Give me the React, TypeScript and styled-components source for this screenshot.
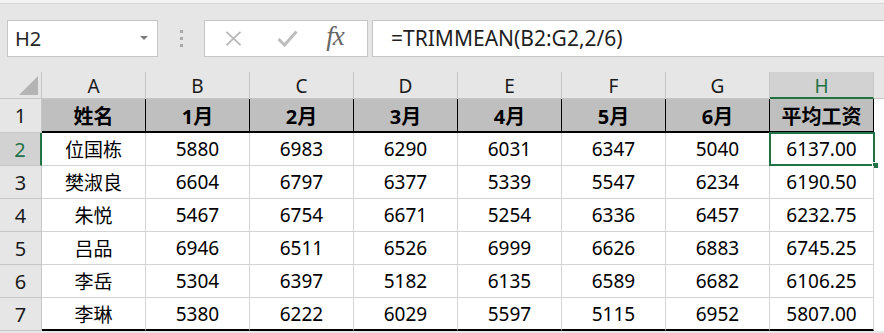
import React from "react";
import styled, { createGlobalStyle } from "styled-components";

const Global = createGlobalStyle`
  html, body { margin: 0; padding: 0; background: #ffffff; }
  body { font-family: "Noto Sans", "Noto Sans CJK SC", sans-serif; overflow: hidden; }
  * { box-sizing: border-box; }
`;

const Page = styled.div`
  width: 884px;
  height: 333px;
  overflow: hidden;
  background: #e6e6e6;
  display: flex;
  flex-direction: column;
`;

const TopStrip = styled.div`
  height: 4px;
  background: #f3f3f3;
  border-bottom: 1px solid #d6d6d6;
`;

const FormulaBar = styled.div`
  display: flex;
  align-items: center;
  height: 68px;
  padding: 15px 0 15px 7px;
`;

const NameBox = styled.div`
  width: 151px;
  height: 37px;
  background: #fff;
  border: 1px solid #c6c6c6;
  display: flex;
  align-items: center;
  justify-content: space-between;
  padding: 0 9px 0 7px;
  font-size: 20px;
  color: #262626;
`;

const Caret = styled.span`
  width: 0;
  height: 0;
  border-left: 4px solid transparent;
  border-right: 4px solid transparent;
  border-top: 4px solid #7a7a7a;
`;

const Grip = styled.div`
  width: 46px;
  display: flex;
  flex-direction: column;
  align-items: center;
  gap: 4px;
  span {
    width: 3px;
    height: 3px;
    background: #a9a9a9;
  }
`;

const ButtonBox = styled.div`
  width: 164px;
  height: 37px;
  background: #fff;
  border: 1px solid #c6c6c6;
  display: flex;
  align-items: center;
  padding-left: 18px;
`;

const IconSlot = styled.div<{ $w: number; $ml?: number }>`
  width: ${(p) => p.$w}px;
  margin-left: ${(p) => p.$ml ?? 0}px;
  display: flex;
  justify-content: center;
  align-items: center;
`;

const Fx = styled.span`
  font-family: "Liberation Serif", "DejaVu Serif", serif;
  font-style: italic;
  font-size: 27px;
  color: #666666;
  letter-spacing: -1px;
  line-height: 1;
  margin-top: -3px;
`;

const FormulaInput = styled.div`
  flex: 1;
  margin-left: 4px;
  height: 37px;
  background: #fff;
  border: 1px solid #c6c6c6;
  border-right: none;
  display: flex;
  align-items: center;
  padding-left: 18px;
  font-size: 21px;
  color: #1f1f1f;
`;

const Grid = styled.div`
  display: grid;
  grid-template-columns: 42px repeat(8, 104px) 1fr;
  grid-template-rows: 27px 34px repeat(6, 33px);
  background: #fff;
  font-size: 19px;
`;

const Corner = styled.div`
  background: #e6e6e6;
  border-right: 1px solid #c6c6c6;
  border-bottom: 1px solid #c6c6c6;
  position: relative;
  &::after {
    content: "";
    position: absolute;
    right: 3px;
    bottom: 3px;
    width: 0;
    height: 0;
    border-left: 19px solid transparent;
    border-bottom: 19px solid #b4b4b4;
  }
`;

const ColHead = styled.div<{ $sel?: boolean }>`
  background: ${(p) => (p.$sel ? "#d2d2d2" : "#e6e6e6")};
  color: ${(p) => (p.$sel ? "#217346" : "#1a1a1a")};
  border-right: 1px solid #c6c6c6;
  border-bottom: ${(p) => (p.$sel ? "2px solid #217346" : "1px solid #c6c6c6")};
  display: flex;
  align-items: center;
  justify-content: center;
  padding-top: 2px;
  font-size: 19px;
`;

const Filler = styled.div<{ $head?: boolean }>`
  background: ${(p) => (p.$head ? "#e6e6e6" : "#fff")};
  border-bottom: ${(p) => (p.$head ? "1px solid #c6c6c6" : "none")};
`;

const RowHead = styled.div<{ $sel?: boolean }>`
  background: ${(p) => (p.$sel ? "#d2d2d2" : "#e6e6e6")};
  color: ${(p) => (p.$sel ? "#217346" : "#1a1a1a")};
  border-right: ${(p) => (p.$sel ? "2px solid #217346" : "1px solid #c6c6c6")};
  border-bottom: 1px solid #c6c6c6;
  display: flex;
  align-items: center;
  justify-content: center;
  font-size: 20px;
`;

const HeadCell = styled.div`
  background: #bfbfbf;
  border-right: 1px solid #000;
  border-bottom: 2px solid #000;
  display: flex;
  align-items: center;
  justify-content: center;
  font-weight: 700;
  color: #000;
  font-size: 20px;
`;

const Cell = styled.div<{ $last?: boolean }>`
  position: relative;
  border-right: 1px solid #d4d4d4;
  border-bottom: ${(p) => (p.$last ? "2px solid #000" : "1px solid #d4d4d4")};
  display: flex;
  align-items: center;
  justify-content: center;
  color: #000;
`;

const Selection = styled.div`
  position: absolute;
  left: -1px;
  top: -1px;
  right: -2px;
  bottom: -1px;
  border: 2px solid #217346;
  pointer-events: none;
`;

const Handle = styled.div`
  position: absolute;
  right: -6px;
  bottom: -5px;
  width: 7px;
  height: 7px;
  background: #217346;
  border: 1px solid #fff;
`;

const cols = ["A", "B", "C", "D", "E", "F", "G", "H"];
const heads = ["姓名", "1月", "2月", "3月", "4月", "5月", "6月", "平均工资"];
const rows: string[][] = [
  ["位国栋", "5880", "6983", "6290", "6031", "6347", "5040", "6137.00"],
  ["樊淑良", "6604", "6797", "6377", "5339", "5547", "6234", "6190.50"],
  ["朱悦", "5467", "6754", "6671", "5254", "6336", "6457", "6232.75"],
  ["吕品", "6946", "6511", "6526", "6999", "6626", "6883", "6745.25"],
  ["李岳", "5304", "6397", "5182", "6135", "6589", "6682", "6106.25"],
  ["李琳", "5380", "6222", "6029", "5597", "5115", "6952", "5807.00"],
];

export default function App() {
  return (
    <Page>
      <Global />
      <TopStrip />
      <FormulaBar>
        <NameBox>
          <span>H2</span>
          <Caret />
        </NameBox>
        <Grip>
          <span />
          <span />
          <span />
        </Grip>
        <ButtonBox>
          <IconSlot $w={20}>
            <svg width="17" height="15" viewBox="0 0 17 15">
              <path d="M1.5 0.8 L15.5 14.2 M15.5 0.8 L1.5 14.2" stroke="#b8b8b8" strokeWidth="1.8" fill="none" />
            </svg>
          </IconSlot>
          <IconSlot $w={36} $ml={26}>
            <svg width="21" height="17" viewBox="0 0 21 17">
              <path d="M1.5 9 L7.5 15 L19.5 1.5" stroke="#bdbdbd" strokeWidth="3" fill="none" />
            </svg>
          </IconSlot>
          <IconSlot $w={36} $ml={12}>
            <Fx>fx</Fx>
          </IconSlot>
        </ButtonBox>
        <FormulaInput>=TRIMMEAN(B2:G2,2/6)</FormulaInput>
      </FormulaBar>
      <Grid>
        <Corner />
        {cols.map((c) => (
          <ColHead key={c} $sel={c === "H"}>
            {c}
          </ColHead>
        ))}
        <Filler $head />

        <RowHead>1</RowHead>
        {heads.map((h) => (
          <HeadCell key={h}>{h}</HeadCell>
        ))}
        <Filler />

        {rows.map((r, i) => (
          <React.Fragment key={i}>
            <RowHead $sel={i === 0}>{i + 2}</RowHead>
            {r.map((v, j) => (
              <Cell key={j} $last={i === rows.length - 1}>
                {v}
                {i === 0 && j === 7 && (
                  <Selection>
                    <Handle />
                  </Selection>
                )}
              </Cell>
            ))}
            <Filler />
          </React.Fragment>
        ))}
      </Grid>
    </Page>
  );
}
